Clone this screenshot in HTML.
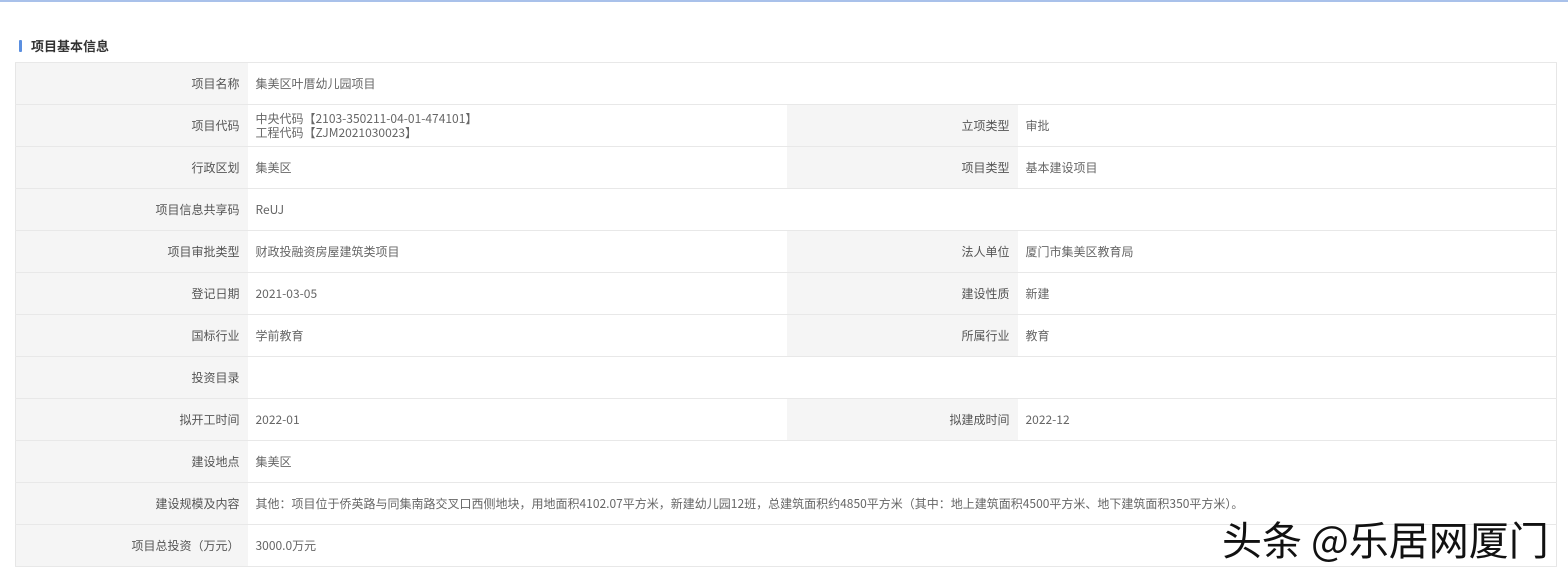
<!DOCTYPE html>
<html><head><meta charset="utf-8"><style>
*{margin:0;padding:0;box-sizing:border-box}
body{width:1568px;height:576px;background:#fff;font-family:"Noto Sans CJK SC","Liberation Sans",sans-serif;font-size:12px;color:#666;position:relative;overflow:hidden}
.top{position:absolute;left:0;top:0;width:1568px;height:2px;background:#a9c1ea}
.title{position:absolute;left:19px;top:37px;font-size:13px;font-weight:bold;color:#333;padding-left:12px;line-height:18px}
.title:before{content:"";position:absolute;left:0;top:3px;width:3px;height:12px;background:#5b8fe0;border-radius:1px}
table{position:absolute;left:15px;top:62px;border-collapse:collapse;table-layout:fixed;width:1541px;border:1px solid #e6e6e6}
td{height:42px;border-top:1px solid #e8e8e8;border-bottom:1px solid #e8e8e8;padding:0 8px;line-height:14px;vertical-align:middle}
td.l{background:#f5f5f5;text-align:right;color:#555}
td.v{background:#fff;color:#666}
.wm{position:absolute;left:1222px;top:512px;font-size:40px;color:#111;font-family:"Noto Sans CJK SC",sans-serif;line-height:52px;white-space:nowrap}
</style></head><body>
<div class="top"></div>
<div class="title">项目基本信息</div>
<table>
<colgroup><col style="width:232px"><col style="width:539px"><col style="width:231px"><col style="width:539px"></colgroup>
<tr><td class="l">项目名称</td><td class="v" colspan="3">集美区叶厝幼儿园项目</td></tr>
<tr><td class="l">项目代码</td><td class="v">中央代码【2103-350211-04-01-474101】<br>工程代码【ZJM2021030023】</td><td class="l">立项类型</td><td class="v">审批</td></tr>
<tr><td class="l">行政区划</td><td class="v">集美区</td><td class="l">项目类型</td><td class="v">基本建设项目</td></tr>
<tr><td class="l">项目信息共享码</td><td class="v" colspan="3">ReUJ</td></tr>
<tr><td class="l">项目审批类型</td><td class="v">财政投融资房屋建筑类项目</td><td class="l">法人单位</td><td class="v">厦门市集美区教育局</td></tr>
<tr><td class="l">登记日期</td><td class="v">2021-03-05</td><td class="l">建设性质</td><td class="v">新建</td></tr>
<tr><td class="l">国标行业</td><td class="v">学前教育</td><td class="l">所属行业</td><td class="v">教育</td></tr>
<tr><td class="l">投资目录</td><td class="v" colspan="3"></td></tr>
<tr><td class="l">拟开工时间</td><td class="v">2022-01</td><td class="l">拟建成时间</td><td class="v">2022-12</td></tr>
<tr><td class="l">建设地点</td><td class="v" colspan="3">集美区</td></tr>
<tr><td class="l">建设规模及内容</td><td class="v" colspan="3">其他：项目位于侨英路与同集南路交叉口西侧地块，用地面积4102.07平方米，新建幼儿园12班，总建筑面积约4850平方米（其中：地上建筑面积4500平方米、地下建筑面积350平方米）。</td></tr>
<tr><td class="l">项目总投资（万元）</td><td class="v" colspan="3">3000.0万元</td></tr>
</table>
<div class="wm">头条 @乐居网厦门</div>
</body></html>
